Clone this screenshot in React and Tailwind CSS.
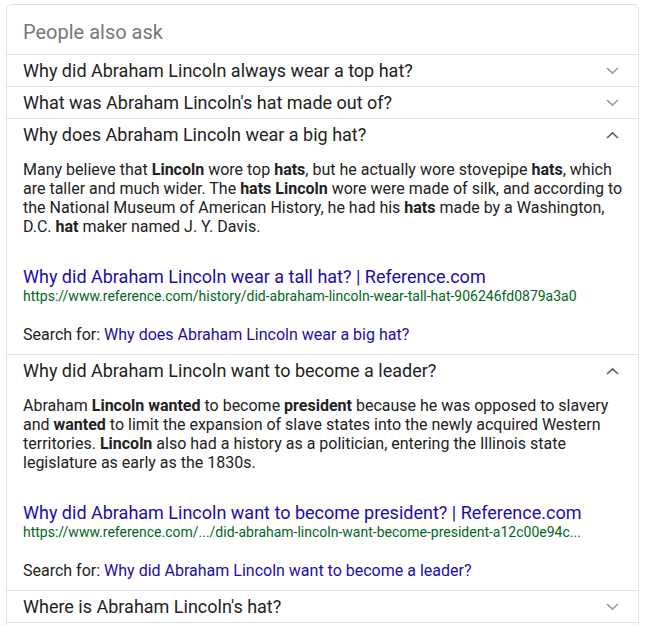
import React from "react";

const font = { fontFamily: "Roboto, 'Liberation Sans', Arial, sans-serif" };

function Chevron({ up }) {
  return (
    <svg width="13" height="8" viewBox="0 0 13 8" className="mr-[3px] shrink-0">
      {up ? (
        <polyline points="1,7 6.5,1.8 12,7" fill="none" stroke="#5f6368" strokeWidth="1.7" />
      ) : (
        <polyline points="1,1 6.5,6.2 12,1" fill="none" stroke="#9e9e9e" strokeWidth="1.7" />
      )}
    </svg>
  );
}

function Row({ q, up, children }) {
  return (
    <div className="border-t border-[#e0e0e0]">
      <div className="h-[31px] px-4 flex items-center justify-between">
        <span className="text-[18px] leading-[24px] text-[#222]">{q}</span>
        <Chevron up={up} />
      </div>
      {children}
    </div>
  );
}

function Answer({ para, title, url, search }) {
  return (
    <div className="px-4 pt-[10px] pb-[9px]">
      <div className="text-[16px] leading-[19px] text-[#222] -mr-3">{para}</div>
      <div className="mt-[31px] text-[18px] leading-[20px] text-[#1a0dab]">{title}</div>
      <div className="text-[14px] leading-[18px] text-[#006621] whitespace-nowrap">{url}</div>
      <div className="mt-[20px] text-[16px] leading-[20px] text-[#222]">
        Search for: <span className="text-[#1a0dab]">{search}</span>
      </div>
    </div>
  );
}

export default function App() {
  return (
    <div className="bg-white w-[646px] h-[625px] overflow-hidden pt-[4px] pl-[6px]" style={font}>
      <div className="w-[633px] border border-[#e0e0e0] rounded-t-[6px]">
        <div className="h-[49px] px-4 pt-[15px] text-[20px] leading-[24px] text-[#777]">People also ask</div>
        <Row q="Why did Abraham Lincoln always wear a top hat?" />
        <Row q="What was Abraham Lincoln's hat made out of?" />
        <Row q="Why does Abraham Lincoln wear a big hat?" up>
          <Answer
            para={
              <>
                Many believe that <b>Lincoln</b> wore top <b>hats</b>, but he actually wore stovepipe <b>hats</b>, which<br />
                are taller and much wider. The <b>hats Lincoln</b> wore were made of silk, and according to<br />
                the National Museum of American History, he had his <b>hats</b> made by a Washington,<br />
                D.C. <b>hat</b> maker named J. Y. Davis.
              </>
            }
            title="Why did Abraham Lincoln wear a tall hat? | Reference.com"
            url="https://www.reference.com/history/did-abraham-lincoln-wear-tall-hat-906246fd0879a3a0"
            search="Why does Abraham Lincoln wear a big hat?"
          />
        </Row>
        <Row q="Why did Abraham Lincoln want to become a leader?" up>
          <Answer
            para={
              <>
                Abraham <b>Lincoln wanted</b> to become <b>president</b> because he was opposed to slavery<br />
                and <b>wanted</b> to limit the expansion of slave states into the newly acquired Western<br />
                territories. <b>Lincoln</b> also had a history as a politician, entering the Illinois state<br />
                legislature as early as the 1830s.
              </>
            }
            title="Why did Abraham Lincoln want to become president? | Reference.com"
            url="https://www.reference.com/.../did-abraham-lincoln-want-become-president-a12c00e94c..."
            search="Why did Abraham Lincoln want to become a leader?"
          />
        </Row>
        <Row q="Where is Abraham Lincoln's hat?" />
        <div className="border-t border-[#e0e0e0] h-[20px]"></div>
      </div>
    </div>
  );
}
